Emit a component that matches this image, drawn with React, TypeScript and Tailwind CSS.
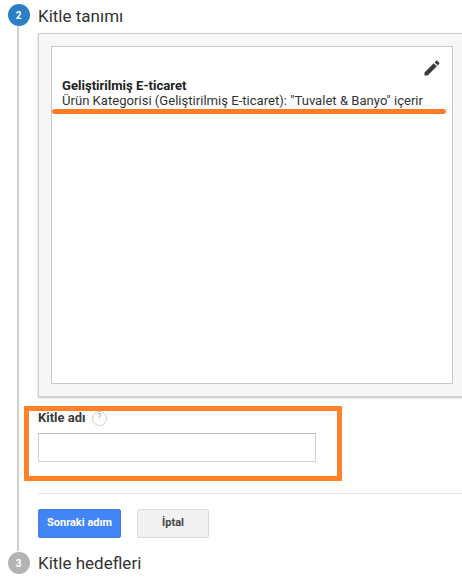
function StepCircle({ n, active }: { n: number; active?: boolean }) {
  return (
    <div
      className={
        active
          ? "flex h-[22px] w-[22px] shrink-0 items-center justify-center rounded-full bg-[#2b7fc7] text-[10px] font-bold text-white"
          : "flex h-[22px] w-[22px] shrink-0 items-center justify-center rounded-full bg-[#b3b3b3] text-[10px] font-bold text-white"
      }
    >
      {n}
    </div>
  );
}

function EditIcon() {
  return (
    <svg viewBox="0 0 24 24" className="h-[20px] w-[20px] fill-[#3c3c3c]">
      <path d="M3 17.25V21h3.75L17.81 9.94l-3.75-3.75L3 17.25zM20.71 7.04c.39-.39.39-1.02 0-1.41l-2.34-2.34c-.39-.39-1.02-.39-1.41 0l-1.83 1.83 3.75 3.75 1.83-1.83z" />
    </svg>
  );
}

export default function App() {
  return (
    <main className="relative h-[578px] w-[462px] overflow-hidden bg-white font-['Roboto',sans-serif] text-[#222]">
      <section className="flex h-[551px]">
        <div className="flex w-[36px] shrink-0 flex-col items-center pt-[4px]">
          <div className="pl-[1px]">
            <StepCircle n={2} active />
          </div>
          <div className="w-[1.5px] flex-1 bg-[#d0d0d0]" />
        </div>
        <div className="ml-[2px] w-[440px] shrink-0">
          <h2 className="h-[33px] pt-[4px] text-[17px] leading-[24px] text-[#333]">Kitle tanımı</h2>
          <div className="h-[364px] border border-[#cfcfcf] bg-[#f7f7f7] p-[12px] shadow-[0_1px_2px_rgba(0,0,0,0.25)]">
            <div className="h-[338px] w-[402px] border border-[#c8c8c8] bg-white pl-[10px] pr-[10px] pt-[11px]">
              <div className="flex justify-end">
                <EditIcon />
              </div>
              <div className="text-[13.1px] leading-[15px]">
                <div className="font-bold text-[#222]">Geliştirilmiş E-ticaret</div>
                <div className="text-[#333]">Ürün Kategorisi (Geliştirilmiş E-ticaret): "Tuvalet &amp; Banyo" içerir</div>
              </div>
            </div>
          </div>
          <div className="mt-[11px] flex h-[20px] items-center gap-[6px]">
            <label className="text-[13px] font-bold text-[#3a3a3a]">Kitle adı</label>
            <span className="flex h-[15px] w-[15px] items-center justify-center rounded-full border border-[#ccc] text-[9px] text-[#aaa]">?</span>
          </div>
          <input
            type="text"
            className="mt-[5px] block h-[29px] w-[278px] border border-[#cfcfcf] border-t-[#bdbdbd] bg-white"
          />
          <hr className="mt-[31px] border-t border-[#e2e2e2]" />
          <div className="mt-[15px] flex gap-[16px]">
            <button className="h-[29px] w-[83px] rounded-[2px] border border-[#3f7fe0] bg-[#4285f4] text-[11px] font-bold text-white">
              Sonraki adım
            </button>
            <button className="h-[29px] w-[72px] rounded-[2px] border border-[#dcdcdc] bg-[#f1f1f1] text-[11px] font-bold text-[#444]">
              İptal
            </button>
          </div>
        </div>
      </section>
      <section className="flex items-center">
        <div className="flex w-[36px] shrink-0 justify-center pl-[1px]">
          <StepCircle n={3} />
        </div>
        <h2 className="ml-[2px] text-[17px] leading-[24px] text-[#333]">Kitle hedefleri</h2>
      </section>
      {/* annotations drawn over the screenshot */}
      <div className="absolute left-[52px] top-[109px] h-[5px] w-[394px] rounded-full bg-[#fb7b26]" />
      <div className="absolute left-[24px] top-[406px] h-[75px] w-[318px] border-[5px] border-[#ff8229]" />
    </main>
  );
}
